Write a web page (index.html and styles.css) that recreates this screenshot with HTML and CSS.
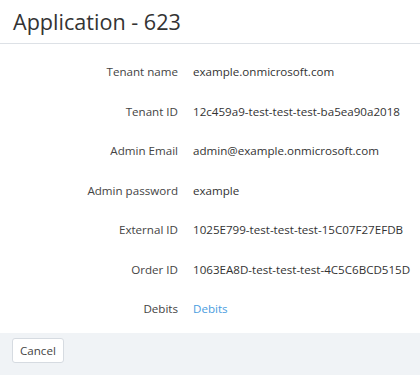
FILE: index.html
```html
<!DOCTYPE html>
<html lang="en">
  <head>
    <meta charset="UTF-8" />
    <title>Application - 623</title>
    <link rel="stylesheet" href="styles.css">
  </head>
  <body>
    <div class="dialog">
      <div class="dialog-header">
        <h1>Application - 623</h1>
      </div>

      <div class="dialog-body">
        <div class="row">
          <div class="label">Tenant name</div>
          <div class="value">example.onmicrosoft.com</div>
        </div>
        <div class="row">
          <div class="label">Tenant ID</div>
          <div class="value">12c459a9-test-test-test-ba5ea90a2018</div>
        </div>
        <div class="row">
          <div class="label">Admin Email</div>
          <div class="value">admin@example.onmicrosoft.com</div>
        </div>
        <div class="row">
          <div class="label">Admin password</div>
          <div class="value">example</div>
        </div>
        <div class="row">
          <div class="label">External ID</div>
          <div class="value">1025E799-test-test-test-15C07F27EFDB</div>
        </div>
        <div class="row">
          <div class="label">Order ID</div>
          <div class="value">1063EA8D-test-test-test-4C5C6BCD515D</div>
        </div>
        <div class="row">
          <div class="label">Debits</div>
          <div class="value"><a href="#">Debits</a></div>
        </div>
      </div>

      <div class="dialog-footer">
        <button type="button">Cancel</button>
      </div>
    </div>
  </body>
</html>
```

FILE: styles.css
```css
body {
  margin: 0;
  background-color: #fff;
  font-family: "Open Sans", Arial, sans-serif;
  color: #333;
}
.dialog {
  display: flex;
  flex-direction: column;
  min-height: 375px;
}
.dialog-header {
  height: 43px;
  border-bottom: 1px solid #dde1e6;
  display: flex;
  align-items: center;
  padding: 0 13px;
}
h1 {
  margin: 0;
  font-size: 21.6px;
  font-weight: 400;
  color: #333;
}
.dialog-body {
  padding: 8px 0 4px;
}
.row {
  display: flex;
  padding: 10px 0;
  line-height: 19.5px;
  font-size: 11.6px;
}
.label {
  flex-shrink: 0;
  width: 178px;
  text-align: right;
  color: #444;
}
.value {
  padding-left: 15px;
  color: #333;
  white-space: nowrap;
}
.value a {
  color: #4a9de0;
  text-decoration: none;
}
.dialog-footer {
  flex: 1;
  background-color: #f0f3f6;
  padding: 5px 12px;
}
button {
  font-family: "Open Sans", Arial, sans-serif;
  font-size: 11.6px;
  color: #444;
  background-color: #fff;
  border: 1px solid #d6dbe1;
  border-radius: 3px;
  padding: 0 7px;
  height: 25px;
  cursor: pointer;
}
```
